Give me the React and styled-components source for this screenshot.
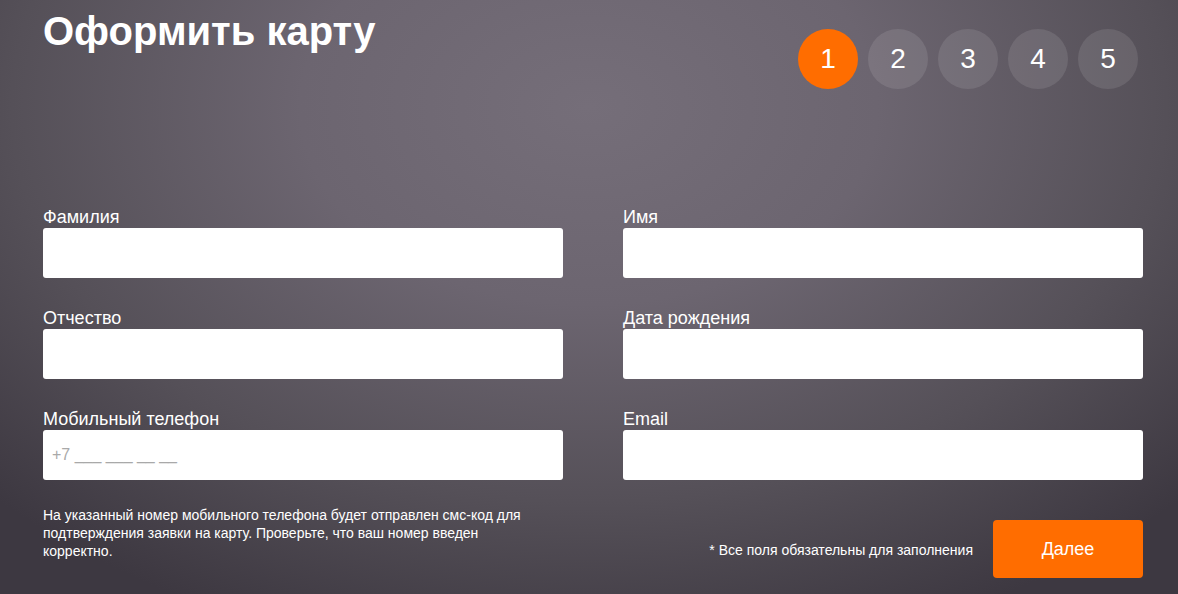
import React from "react";
import styled, { createGlobalStyle } from "styled-components";

const GlobalStyle = createGlobalStyle`
  html, body {
    margin: 0;
    padding: 0;
    height: 100%;
  }
  body {
    font-family: "Liberation Sans", Arial, sans-serif;
    background: #3e3942;
  }
  #root {
    min-height: 100%;
  }
`;

const Page = styled.div`
  width: 1178px;
  height: 594px;
  overflow: hidden;
  box-sizing: border-box;
  padding: 0 35px 0 43px;
  color: #fff;
  background: radial-gradient(
    ellipse 70% 95% at 50% 18%,
    #756e79 0%,
    #6c6570 35%,
    #555058 70%,
    #3d3841 100%
  );
`;

const Header = styled.div`
  display: flex;
  justify-content: space-between;
  align-items: flex-start;
  height: 207px;
`;

const Title = styled.h1`
  margin: 8px 0 0;
  font-size: 40px;
  font-weight: bold;
  line-height: 46px;
`;

const Steps = styled.div`
  display: flex;
  gap: 10px;
  margin-top: 29px;
  margin-right: 5px;
`;

const Step = styled.div`
  width: 60px;
  height: 60px;
  border-radius: 50%;
  display: flex;
  align-items: center;
  justify-content: center;
  font-size: 28px;
  color: #fff;
  background: ${(p) => (p.active ? "#ff6d00" : "rgba(255, 255, 255, 0.1)")};
`;

const Grid = styled.div`
  display: grid;
  grid-template-columns: 520px 520px;
  column-gap: 60px;
  row-gap: 30px;
`;

const Field = styled.label`
  display: flex;
  flex-direction: column;
`;

const Label = styled.span`
  font-size: 18px;
  line-height: 20px;
  margin-bottom: 1px;
`;

const Input = styled.input`
  box-sizing: border-box;
  height: 50px;
  width: 100%;
  border: none;
  border-radius: 3px;
  background: #fff;
  padding: 0 9px;
  font-family: "Liberation Sans", Arial, sans-serif;
  font-size: 16px;
  color: #333;
  outline: none;
  &::placeholder {
    color: #a9a9a9;
  }
`;

const Footer = styled.div`
  display: flex;
  justify-content: space-between;
  align-items: flex-start;
  margin-top: 26px;
`;

const Note = styled.p`
  margin: 0;
  width: 500px;
  font-size: 14px;
  line-height: 18px;
`;

const Actions = styled.div`
  display: flex;
  align-items: center;
  gap: 20px;
  margin-top: 14px;
`;

const Required = styled.span`
  font-size: 14px;
  margin-top: 1px;
`;

const NextButton = styled.button`
  width: 150px;
  height: 58px;
  border: none;
  border-radius: 4px;
  background: #ff6d00;
  color: #fff;
  font-family: "Liberation Sans", Arial, sans-serif;
  font-size: 18px;
  cursor: pointer;
`;

const fields = [
  { label: "Фамилия" },
  { label: "Имя" },
  { label: "Отчество" },
  { label: "Дата рождения" },
  { label: "Мобильный телефон", placeholder: "+7 ___ ___ __ __" },
  { label: "Email" },
];

const App = () => {
  return (
    <Page>
      <GlobalStyle />
      <Header>
        <Title>Оформить карту</Title>
        <Steps>
          {[1, 2, 3, 4, 5].map((n) => (
            <Step key={n} active={n === 1}>
              {n}
            </Step>
          ))}
        </Steps>
      </Header>
      <Grid>
        {fields.map((f) => (
          <Field key={f.label}>
            <Label>{f.label}</Label>
            <Input type="text" placeholder={f.placeholder || ""} />
          </Field>
        ))}
      </Grid>
      <Footer>
        <Note>
          На указанный номер мобильного телефона будет отправлен смс-код для
          подтверждения заявки на карту. Проверьте, что ваш номер введен
          корректно.
        </Note>
        <Actions>
          <Required>* Все поля обязательны для заполнения</Required>
          <NextButton>Далее</NextButton>
        </Actions>
      </Footer>
    </Page>
  );
};

export default App;
